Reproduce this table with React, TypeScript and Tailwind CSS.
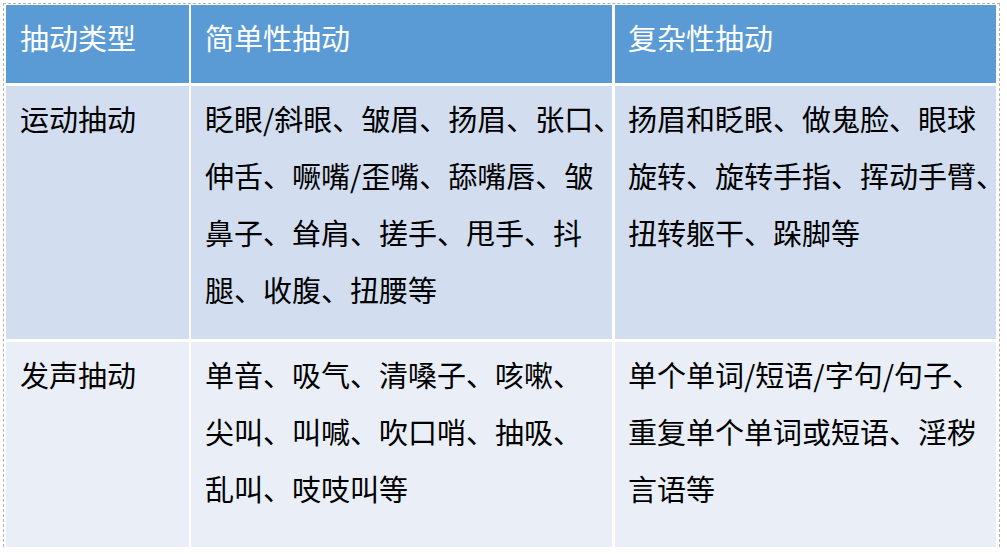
import { Fragment } from 'react';

const rows = [
  {
    type: '运动抽动',
    simple: ['眨眼/斜眼、皱眉、扬眉、张口、', '伸舌、噘嘴/歪嘴、舔嘴唇、皱', '鼻子、耸肩、搓手、甩手、抖', '腿、收腹、扭腰等'],
    complex: ['扬眉和眨眼、做鬼脸、眼球', '旋转、旋转手指、挥动手臂、', '扭转躯干、跺脚等'],
    bg: 'bg-[#d2deef]',
    h: 'h-[253px]',
  },
  {
    type: '发声抽动',
    simple: ['单音、吸气、清嗓子、咳嗽、', '尖叫、叫喊、吹口哨、抽吸、', '乱叫、吱吱叫等'],
    complex: ['单个单词/短语/字句/句子、', '重复单个单词或短语、淫秽', '言语等'],
    bg: 'bg-[#eaeff7]',
    h: 'h-[205px]',
  },
];

const Lines = ({ lines }: { lines: string[] }) => (
  <>
    {lines.map((l, i) => (
      <div key={i} className="whitespace-nowrap">
        {l}
      </div>
    ))}
  </>
);

export default function App() {
  return (
    <div className="w-[1007px] h-[554px] bg-white overflow-hidden">
      <div
        className="ml-[3px] mt-[3px] w-[997px] border-t border-l border-r border-dashed border-[#b4b4b4] pl-[2px] pr-[2px] pt-[1px] text-[29px] leading-[57px] text-black"
        style={{ fontFamily: '"Noto Sans CJK SC", "Noto Sans", sans-serif' }}
      >
        <div className="grid grid-cols-[183px_421px_382px] gap-x-[2px] gap-y-[3px]">
          <div className="h-[78px] bg-[#5b9bd5] text-white pl-[14px] pt-[4px]">抽动类型</div>
          <div className="h-[78px] bg-[#5b9bd5] text-white pl-[14px] pt-[4px]">简单性抽动</div>
          <div className="h-[78px] bg-[#5b9bd5] text-white pl-[13px] pt-[4px] ml-[1px]">复杂性抽动</div>
          {rows.map((r) => (
            <Fragment key={r.type}>
              <div className={`${r.h} ${r.bg} pl-[14px] pt-[4px]`}>{r.type}</div>
              <div className={`${r.h} ${r.bg} pl-[14px] pt-[4px]`}>
                <Lines lines={r.simple} />
              </div>
              <div className={`${r.h} ${r.bg} pl-[13px] pt-[4px] ml-[1px]`}>
                <Lines lines={r.complex} />
              </div>
            </Fragment>
          ))}
        </div>
      </div>
    </div>
  );
}
